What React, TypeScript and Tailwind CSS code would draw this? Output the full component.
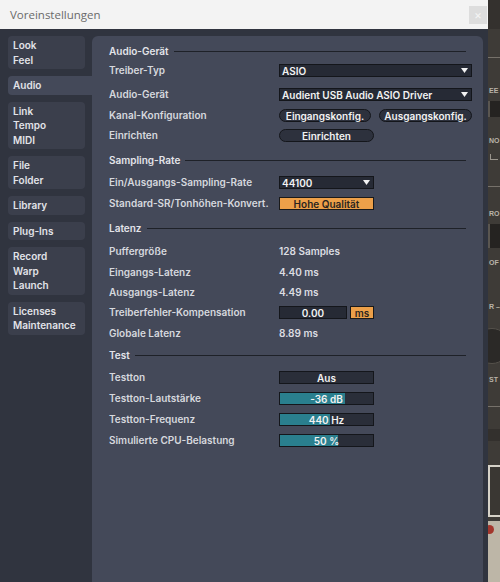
import React from "react";

const Tri = () => (
  <svg width="7" height="5" viewBox="0 0 7 5" className="shrink-0">
    <path d="M0 0H7L3.5 5Z" fill="#f2f2f2" />
  </svg>
);

function Label({ children }: { children: React.ReactNode }) {
  return <div className="w-[170px] shrink-0 text-[#d6d8de] leading-[13px]">{children}</div>;
}

function Header({ title, className }: { title: string; className: string }) {
  return (
    <div className={"h-[13px] flex items-center mr-[6px] text-[#e3e4e9] " + className}>
      <span className="leading-[13px]">{title}</span>
      <div className="flex-1 h-px bg-[#1e2128] ml-[5px]" />
    </div>
  );
}

function Row({ className, label, children }: { className: string; label: string; children?: React.ReactNode }) {
  return (
    <div className={"h-[13px] flex items-center " + className}>
      <Label>{label}</Label>
      <div className="flex-1 flex items-center h-[13px]">{children}</div>
    </div>
  );
}

function Dropdown({ text, w }: { text: string; w: string }) {
  return (
    <div className={"h-[13px] bg-[#262a35] border border-[#14161b] flex items-center justify-between pl-[2px] pr-[3px] text-[#f2f2f2] leading-none " + w}>
      <span>{text}</span>
      <Tri />
    </div>
  );
}

function Pill({ text, w }: { text: string; w: string }) {
  return (
    <div className={"h-[13px] rounded-full bg-[#2d313d] border border-[#14161b] flex items-center justify-center text-[#f2f2f2] leading-none " + w}>
      {text}
    </div>
  );
}

function Slider({ text, pct }: { text: string; pct: number }) {
  return (
    <div className="relative h-[13px] w-[95px] bg-[#2a2e39] border border-[#14161b]">
      <div className="h-full bg-[#2a7f8e]" style={{ width: pct + "%" }} />
      <span className="absolute inset-0 flex items-center justify-center text-[#f2f2f2] leading-none">{text}</span>
    </div>
  );
}

function Tab({ lines, selected, className }: { lines: string[]; selected?: boolean; className?: string }) {
  return (
    <div
      className={
        (selected
          ? "w-[84px] bg-[#444959] rounded-l-[4px]"
          : "w-[77px] bg-[#3b3f4c] rounded-[4px]") +
        " py-[2px] pl-[5px] text-[#e2e3e8] leading-[14.5px] " +
        (className || "")
      }
    >
      {lines.map((l) => (
        <div key={l}>{l}</div>
      ))}
    </div>
  );
}

function BgStrip() {
  const txt = "text-[7px] leading-[12px] text-[#b9b3a9] font-['Liberation_Sans',sans-serif] whitespace-nowrap pl-px";
  return (
    <div className="w-[12px] h-[582px] flex flex-col bg-[#3e3b37] overflow-hidden">
      <div className="h-[29px] bg-[#34312e] shrink-0" />
      <div className="h-[28px] shrink-0" />
      <div className="h-px bg-[#76716a] shrink-0" />
      <div className="h-[27px] shrink-0" />
      <div className={"h-[12px] shrink-0 " + txt}>EE</div>
      <div className="h-[4px] shrink-0" />
      <div className="h-[16px] shrink-0 bg-[#252321] border-l-2 border-[#5a5650]" />
      <div className="h-[18px] shrink-0" />
      <div className={"h-[12px] shrink-0 " + txt}>NO</div>
      <div className="h-[7px] shrink-0" />
      <div className="h-[6px] w-[8px] shrink-0 ml-[2px] border-l border-b border-[#9a958c]" />
      <div className="h-[26px] shrink-0" />
      <div className="h-px bg-[#76716a] shrink-0" />
      <div className="h-[21px] shrink-0" />
      <div className={"h-[12px] shrink-0 " + txt}>RO</div>
      <div className="h-[4px] shrink-0" />
      <div className="h-[24px] shrink-0 bg-[#252321] border-l-2 border-[#5a5650]" />
      <div className="h-[9px] shrink-0" />
      <div className={"h-[12px] shrink-0 " + txt}>OF</div>
      <div className="h-[32px] shrink-0" />
      <div className={"h-[12px] shrink-0 " + txt}>R –</div>
      <div className="h-[15px] shrink-0" />
      <div className="h-[36px] w-[36px] shrink-0 -ml-[14px] rounded-full bg-[#2b2927] border border-[#55514b]" />
      <div className="h-[10px] shrink-0" />
      <div className={"h-[12px] shrink-0 " + txt}>ST</div>
      <div className="h-[20px] shrink-0" />
      <div className="h-px bg-[#76716a] shrink-0" />
      <div className="h-[22px] shrink-0" />
      <div className="h-[12px] bg-[#33302d] shrink-0" />
      <div className="h-[24px] shrink-0" />
      <div className="h-[52px] shrink-0 border-l-2 border-t-2 border-b-2 border-[#d6d2c8] bg-[#3a3733]" />
      <div className="h-[4px] shrink-0" />
      <div className="flex-1 bg-[#bdb6a7] pt-[4px]">
        <div className="h-[9px] w-[9px] -ml-[3px] rounded-full bg-[#a3362c]" />
      </div>
    </div>
  );
}

export default function App() {
  return (
    <div className="w-[500px] h-[582px] flex overflow-hidden bg-[#3e3b37] font-['Inter','Noto_Sans',sans-serif] text-[10px] font-semibold">
      <div className="w-[488px] h-[582px] flex flex-col shrink-0">
        {/* title bar */}
        <div className="h-[29px] shrink-0 bg-[#f3f3f3] flex items-center justify-between pl-[10px] pr-[1px]">
          <span className="font-['Open_Sans',sans-serif] font-normal text-[11.5px] text-[#6a6a6a]">Voreinstellungen</span>
          <div className="w-[18px] h-[18px] bg-[#dddddd] flex items-center justify-center text-[#f4f4f4] font-normal text-[12px] leading-none">
            ×
          </div>
        </div>
        {/* body */}
        <div className="flex-1 flex bg-[#30343f] pt-[7px]">
          <div className="w-[92px] shrink-0 pl-[8px] flex flex-col gap-[7px]">
            <Tab lines={["Look", "Feel"]} />
            <Tab lines={["Audio"]} selected />
            <Tab lines={["Link", "Tempo", "MIDI"]} />
            <Tab lines={["File", "Folder"]} />
            <Tab lines={["Library"]} />
            <Tab lines={["Plug-Ins"]} />
            <Tab lines={["Record", "Warp", "Launch"]} />
            <Tab lines={["Licenses", "Maintenance"]} />
          </div>
          <div className="w-[391px] shrink-0 bg-[#444959] rounded-t-[6px] pl-[17px] pr-[11px] pt-[9px] flex flex-col">
            <Header title="Audio-Gerät" className="" />
            <Row className="mt-[6px]" label="Treiber-Typ">
              <Dropdown text="ASIO" w="w-[193px]" />
            </Row>
            <Row className="mt-[11px]" label="Audio-Gerät">
              <Dropdown text="Audient USB Audio ASIO Driver" w="w-[193px]" />
            </Row>
            <Row className="mt-[8px]" label="Kanal-Konfiguration">
              <div className="flex gap-[8px]">
                <Pill text="Eingangskonfig." w="w-[92px]" />
                <Pill text="Ausgangskonfig." w="w-[93px]" />
              </div>
            </Row>
            <Row className="mt-[7px]" label="Einrichten">
              <Pill text="Einrichten" w="w-[95px]" />
            </Row>

            <Header title="Sampling-Rate" className="mt-[12px]" />
            <Row className="mt-[9px]" label="Ein/Ausgangs-Sampling-Rate">
              <Dropdown text="44100" w="w-[95px]" />
            </Row>
            <Row className="mt-[8px]" label="Standard-SR/Tonhöhen-Konvert.">
              <div className="h-[13px] w-[95px] bg-[#eda049] border border-[#1a1a1a] flex items-center justify-center text-[#2a2520] leading-none">
                Hohe Qualität
              </div>
            </Row>

            <Header title="Latenz" className="mt-[12px]" />
            <Row className="mt-[10px]" label="Puffergröße">
              <span className="text-[#dcdde2]">128 Samples</span>
            </Row>
            <Row className="mt-[8px]" label="Eingangs-Latenz">
              <span className="text-[#dcdde2]">4.40 ms</span>
            </Row>
            <Row className="mt-[7px]" label="Ausgangs-Latenz">
              <span className="text-[#dcdde2]">4.49 ms</span>
            </Row>
            <Row className="mt-[7px]" label="Treiberfehler-Kompensation">
              <div className="flex gap-[3px]">
                <div className="h-[13px] w-[68px] bg-[#262a35] border border-[#14161b] flex items-center justify-center text-[#f2f2f2] leading-none">
                  0.00
                </div>
                <div className="h-[13px] w-[24px] bg-[#eda049] border border-[#1a1a1a] flex items-center justify-center text-[#2a2520] leading-none">
                  ms
                </div>
              </div>
            </Row>
            <Row className="mt-[8px]" label="Globale Latenz">
              <span className="text-[#dcdde2]">8.89 ms</span>
            </Row>

            <Header title="Test" className="mt-[9px]" />
            <Row className="mt-[9px]" label="Testton">
              <div className="h-[13px] w-[95px] bg-[#2a2e39] border border-[#14161b] flex items-center justify-center text-[#f2f2f2] leading-none">
                Aus
              </div>
            </Row>
            <Row className="mt-[8px]" label="Testton-Lautstärke">
              <Slider text="-36 dB" pct={70} />
            </Row>
            <Row className="mt-[8px]" label="Testton-Frequenz">
              <Slider text="440 Hz" pct={54} />
            </Row>
            <Row className="mt-[8px]" label="Simulierte CPU-Belastung">
              <Slider text="50 %" pct={62} />
            </Row>
          </div>
        </div>
      </div>
      <BgStrip />
    </div>
  );
}
